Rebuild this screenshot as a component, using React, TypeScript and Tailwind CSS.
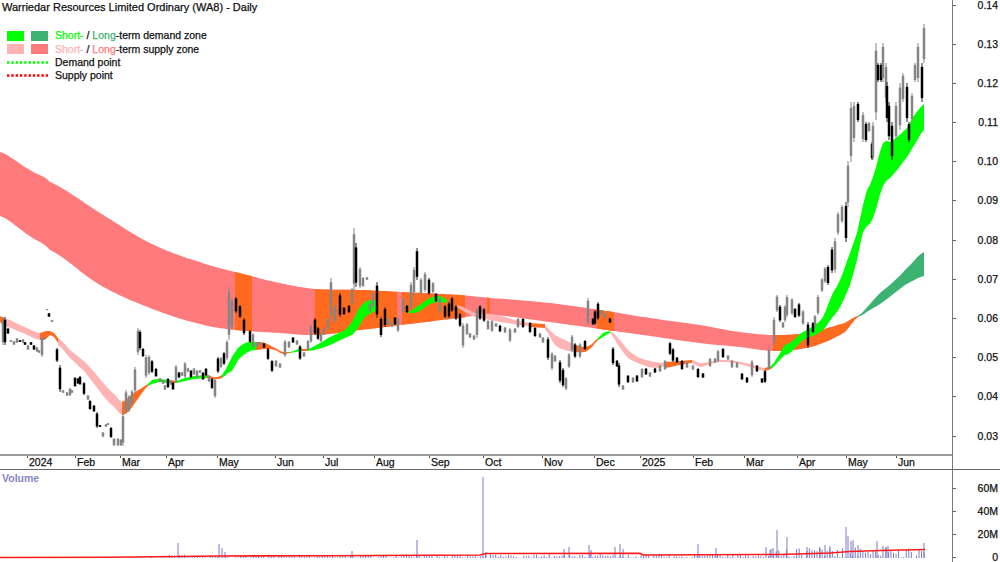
import React from "react";

type Bar = [number, number, number, number];
type Band = [number, number, number];

const ORANGE = "#ff6a1f";
const GREEN = "#00ff00";
const PINK = "#ffb3b3";
const RED = "#ff7b7b";
const SEA = "#3cb371";

const bars: Bar[] = [
  [3,317,345,0],[5,317,345,1],[8,328,334,1],[11,340,342,0],[14,341,345,0],[17,338,343,0],[20,340,342,1],[23,339,343,0],[25,342,345,1],[28,345,350,0],[31,342,345,1],[34,345,350,1],[37,347,352,0],[39,350,353,0],[42,337,357,0],[44,337,340,0],[47,309,310,0],[49,313,317,1],[52,320,322,0],
  [57,348,362,1],[60,365,392,1],[63,390,393,0],[67,392,396,0],[70,388,396,0],[72,390,393,0],[75,377,387,1],[78,378,384,1],[80,376,385,1],[84,382,395,1],[88,395,400,0],[90,400,410,1],[94,405,412,1],[97,412,428,1],[100,425,427,1],[103,432,437,0],[106,424,427,0],[108,423,425,0],[111,427,438,1],[114,438,446,0],[118,438,446,0],[121,439,446,0],[123,413,446,0],
  [126,390,414,0],[129,395,412,0],[132,390,405,0],[135,367,393,0],[138,328,355,0],[140,330,350,1],[143,348,357,1],[146,355,378,0],[149,355,375,0],[152,360,373,1],[156,368,377,1],[160,378,382,0],[163,380,384,0],[165,385,390,0],[168,378,388,1],[171,380,385,0],[173,382,390,1],[176,365,383,0],[179,372,378,1],[182,372,376,0],[185,362,378,0],[188,368,372,0],[191,370,378,1],[194,368,375,0],[197,370,378,0],[200,370,373,0],[203,372,380,1],[206,368,376,1],[209,375,382,0],[212,378,389,1],[215,378,398,0],
  [218,357,373,1],[221,357,368,0],[224,352,365,1],[227,340,360,0],[229,287,340,0],[232,298,330,0],[236,297,313,1],[240,305,318,1],[244,318,335,1],[250,330,343,1],[253,333,348,0],[257,342,347,0],[260,342,345,0],[264,343,348,1],[268,348,360,1],[272,360,372,1],[276,360,367,0],[280,363,368,0],[285,340,357,0],[289,341,348,0],[293,337,343,1],[297,340,345,0],[300,345,360,1],[304,352,357,0],[308,340,350,0],[311,325,343,0],[315,318,335,1],[318,327,340,1],[321,333,342,0],[324,328,335,0],[328,318,330,0],[331,278,320,0],[335,305,323,0],[340,293,317,1],[344,307,315,1],[349,305,313,1],[352,288,305,0],[354,228,290,0],[356,243,287,1],[360,267,288,0],[363,277,287,0],[367,277,280,0],[370,303,312,0],[373,292,307,0],[377,282,318,1],[381,317,337,1],[385,307,327,1],[388,318,325,0],[392,322,327,0],[395,317,325,1],[398,317,332,0],
  [403,298,313,0],[407,305,313,1],[411,282,310,0],[414,267,295,0],[417,248,280,1],[421,278,295,0],[425,272,292,0],[429,278,295,1],[433,282,293,0],[436,293,302,1],[440,297,313,0],[445,305,318,1],[449,302,318,1],[452,297,312,1],[456,305,320,1],[460,313,327,1],[463,323,348,0],[467,323,335,0],[470,333,338,0],[474,335,340,0],[477,307,338,0],[480,305,320,1],[484,308,322,1],[488,320,330,0],[492,320,332,0],[496,323,327,0],
  [500,325,332,1],[505,327,333,0],[510,328,342,0],[515,328,333,0],[518,318,328,0],[523,318,328,1],[530,322,333,1],[535,327,337,1],[540,333,338,0],[543,337,343,0],[548,337,360,1],[552,352,370,0],[555,355,362,0],[560,360,383,1],[563,368,387,1],[566,377,390,0],[569,353,368,0],[572,335,352,0],[575,343,358,1],[580,343,358,0],[585,340,350,1],
  [588,298,325,0],[593,318,325,1],[595,310,325,1],[598,302,320,1],[602,310,315,0],[605,313,318,0],[610,318,323,1],[613,347,365,1],[617,360,367,1],[619,363,387,1],[623,385,390,0],[628,375,383,1],[633,377,383,0],[637,375,382,1],[642,368,378,0],[646,368,375,1],[650,372,377,0],[655,368,373,1],[660,365,372,0],[665,360,370,0],[670,342,355,1],[673,348,362,1],[677,357,363,1],[682,360,370,1],[687,362,368,0],[693,365,370,0],[698,368,378,1],[703,373,378,1],[710,358,367,0],[715,358,363,0],[718,350,362,0],[723,348,358,1],[728,355,360,0],[732,360,368,0],[737,362,368,0],[742,373,380,1],[747,377,383,1],[752,360,377,0],[757,365,372,1],[762,378,383,1],[765,370,383,1],[769,348,370,0],
  [774,317,345,0],[777,295,312,0],[780,305,322,1],[783,322,328,0],[785,305,322,0],[787,295,317,0],[792,298,315,0],[795,308,318,1],[799,303,317,1],[803,310,325,0],[808,322,348,1],[813,322,333,1],[815,315,327,0],[818,295,315,0],[822,278,292,0],[825,267,283,0],[828,265,285,1],[832,247,273,1],[835,238,273,0],[838,212,235,0],[842,205,223,0],[846,202,242,1],[848,161,207,0],[851,102,162,0],[854,102,142,0],[858,102,122,1],[863,112,142,0],[866,122,142,1],[869,122,132,0],[872,142,160,1],[873,122,160,0],[876,43,120,0],[878,63,82,1],[881,63,82,1],[883,43,82,0],[886,63,102,0],[887,82,122,1],[889,102,140,1],[892,122,160,1],[896,102,140,0],[900,83,130,0],[903,73,102,0],[907,83,122,1],[909,122,142,1],[912,93,122,0],[915,63,82,0],[918,43,82,0],[922,63,102,1],[924,24,63,0],
];

const longZoneKeys: Band[] = [
  [0,152,216],[30,170,236],[50,182,250],[100,213,285],[150,243,308],[200,262,324],[235,272,330],[280,283,333],[315,289,335],[360,290,330],[400,292,325],[460,295,318],[490,298,315],[550,303,322],[600,310,329],[650,318,336],[700,325,343],[740,332,347],[773,335,351],
  [800,334,349],[820,330,344],[845,323,332],[858,316,317],
];

const shortZoneKeys: { c: string; b: Band[] }[] = [
  { c: ORANGE, b: [[0,316,322],[4,318,326]] },
  { c: PINK, b: [[4,318,326],[20,325,332],[40,333,340]] },
  { c: ORANGE, b: [[40,333,340],[46,331,339],[50,331,335],[54,333,337],[58,338,343]] },
  { c: PINK, b: [[58,338,345],[70,350,358],[85,362,372],[95,373,385],[105,385,398],[115,395,408],[122,402,415]] },
  { c: ORANGE, b: [[122,402,415],[128,398,412],[135,392,403],[142,388,393],[148,384,386]] },
  { c: GREEN, b: [[148,384,386],[152,380,384],[160,379,382],[168,380,383]] },
  { c: ORANGE, b: [[168,380,383],[176,381,383]] },
  { c: GREEN, b: [[176,381,383],[185,378,381],[195,376,379],[207,375,378]] },
  { c: ORANGE, b: [[207,375,378],[213,377,379],[218,377,379],[222,375,378]] },
  { c: GREEN, b: [[222,375,378],[228,365,373],[232,357,371],[238,348,360],[245,343,354],[250,342,351],[256,342,350]] },
  { c: ORANGE, b: [[256,342,350],[265,343,349],[275,348,350],[283,352,354],[290,352,353]] },
  { c: GREEN, b: [[290,352,353],[296,350,352],[302,348,351]] },
  { c: ORANGE, b: [[302,349,351],[308,349,351]] },
  { c: GREEN, b: [[308,349,351],[318,344,349],[330,337,345],[345,330,338],[352,322,335],[358,310,328],[365,302,317],[372,300,313],[378,300,310]] },
  { c: GREEN, b: [[408,312,313],[418,306,312],[430,298,304],[440,296,302],[447,300,303]] },
  { c: PINK, b: [[456,305,307],[465,308,312],[475,313,317],[490,314,320],[500,316,322],[520,321,325],[530,323,326]] },
  { c: ORANGE, b: [[530,323,327],[545,324,328]] },
  { c: PINK, b: [[545,326,329],[555,335,345],[565,340,350],[575,345,352]] },
  { c: ORANGE, b: [[575,345,352],[585,347,352],[592,344,347],[598,338,340]] },
  { c: GREEN, b: [[598,338,340],[603,333,337],[610,331,333]] },
  { c: PINK, b: [[610,331,333],[618,338,345],[628,350,358],[640,358,364],[655,362,368],[665,363,366]] },
  { c: ORANGE, b: [[665,362,368],[680,361,365],[692,360,363]] },
  { c: PINK, b: [[692,360,363],[700,363,367],[710,362,364],[720,360,362],[735,361,363],[750,364,367],[765,368,371]] },
  { c: ORANGE, b: [[765,368,371],[771,366,369]] },
  { c: GREEN, b: [[771,366,369],[777,358,363],[785,345,355],[790,343,353],[800,334,343],[807,330,338],[813,326,336],[823,317,330],[832,295,318],[840,280,307],[850,253,285],[857,233,260],[863,205,232],[867,190,226],[873,177,218],[883,143,186],[890,142,178],[897,137,170],[907,128,157],[913,117,147],[924,104,130]] },
];

const longDemandKeys: Band[] = [[858,316,317],[870,304,310],[880,293,304],[892,283,295],[905,270,285],[924,252,276]];

function smooth(b: Band[]): Band[] {
  if (b.length < 3) return b;
  const cr = (p0: number, p1: number, p2: number, p3: number, t: number) =>
    0.5 * (2 * p1 + (p2 - p0) * t + (2 * p0 - 5 * p1 + 4 * p2 - p3) * t * t + (3 * p1 - p0 - 3 * p2 + p3) * t * t * t);
  const out: Band[] = [];
  for (let i = 0; i < b.length - 1; i++) {
    const a = b[Math.max(i - 1, 0)];
    const c = b[i];
    const d = b[i + 1];
    const e = b[Math.min(i + 2, b.length - 1)];
    const steps = Math.max(1, Math.round((d[0] - c[0]) / 3));
    for (let s = 0; s < steps; s++) {
      const t = s / steps;
      out.push([c[0] + (d[0] - c[0]) * t, cr(a[1], c[1], d[1], e[1], t), cr(a[2], c[2], d[2], e[2], t)]);
    }
  }
  out.push(b[b.length - 1]);
  return out;
}

const longZone = smooth(longZoneKeys);
const longDemand = smooth(longDemandKeys);
const shortZones = shortZoneKeys.map((s) => ({ c: s.c, b: smooth(s.b) }));

function at(b: Band[], x: number): Band {
  for (let i = 1; i < b.length; i++) {
    if (x <= b[i][0]) {
      const [x0, t0, l0] = b[i - 1];
      const [x1, t1, l1] = b[i];
      const k = (x - x0) / (x1 - x0);
      return [x, t0 + (t1 - t0) * k, l0 + (l1 - l0) * k];
    }
  }
  return b[b.length - 1];
}

function slice(b: Band[], a: number, z: number): Band[] {
  return [at(b, a), ...b.filter((p) => p[0] > a && p[0] < z), at(b, z)];
}

function pts(b: Band[]) {
  const top = b.map((p) => `${p[0]},${p[1]}`);
  const low = [...b].reverse().map((p) => `${p[0]},${p[2]}`);
  return [...top, ...low].join(" ");
}

const orangeRanges: [number, number][] = [[235,252],[315,397],[402,465],[487,490],[597,614],[773,858]];

const spikes: Record<number, number> = {
  178: 543, 219: 544, 222: 548, 225: 552, 417: 540, 352: 551, 483: 477, 486: 552, 564: 549, 569: 547, 589: 545, 591: 550, 615: 547, 620: 544, 623: 549, 698: 544, 716: 548, 770: 550, 773: 548, 777: 530, 787: 537, 807: 547, 820: 548, 825: 545, 830: 546, 846: 527, 848: 536, 851: 541, 853: 540, 858: 545, 877: 541, 883: 546, 886: 547, 888: 546, 924: 543,
};

function volumeBars() {
  const out: { x: number; top: number }[] = [];
  for (let x = 1; x < 925; x += 2.55) {
    const r = Math.abs(Math.sin(x * 12.9898) * 43758.5453) % 1;
    const scale = x < 160 ? 1 : x < 480 ? 3.5 : x < 765 ? 4 : 11;
    out.push({ x, top: 558 - r * scale });
  }
  Object.entries(spikes).forEach(([x, top]) => out.push({ x: Number(x), top }));
  return out;
}

const prices = ["0.14","0.13","0.12","0.11","0.10","0.09","0.08","0.07","0.06","0.05","0.04","0.03"];
const months: [string, number][] = [["",27],["2024",48],["Feb",45],["Mar",46],["Apr",51],["May",58],["Jun",48],["Jul",51],["Aug",55],["Sep",54],["Oct",59],["Nov",52],["Dec",46],["2025",53],["Feb",51],["Mar",53],["Apr",49],["May",50],["Jun",56]];

function PriceChart() {
  return (
    <svg width="952" height="454" viewBox="0 0 952 454" className="block">
      <polygon points={pts(longZone)} fill={RED} />
      {orangeRanges.map(([a, z]) => (
        <polygon key={a} points={pts(slice(longZone, a, z))} fill={ORANGE} />
      ))}
      <polygon points={pts(longDemand)} fill={SEA} />
      {shortZones.map((s, i) => (
        <polygon key={i} points={pts(s.b)} fill={s.c} />
      ))}
      {bars.map(([x, h, l, c]) => {
        const colour = c ? "#000000" : "#858585";
        const inset = (l - h) * 0.1;
        return (
          <g key={x + "-" + h}>
            <line x1={x} x2={x} y1={h} y2={l} stroke={c ? "#222222" : "#858585"} strokeWidth="1" />
            <rect x={x - 1.25} y={h + inset} width={2.5} height={Math.max(l - h - inset * 2, 1)} fill={colour} />
          </g>
        );
      })}
    </svg>
  );
}

function VolumeChart() {
  return (
    <svg width="952" height="92" viewBox="0 470 952 92" className="block">
      {volumeBars().map((b, i) => (
        <line key={i} x1={b.x} x2={b.x} y1={b.top} y2={558} stroke="#7a7acc" strokeWidth="1" />
      ))}
      <polyline
        points="0,557.5 110,557.2 220,556 330,555.7 480,555 486,553.5 640,553.3 643,555 780,554.5 830,553 850,551.5 880,550.5 925,549.5"
        fill="none"
        stroke="#ff1a1a"
        strokeWidth="1.6"
      />
    </svg>
  );
}

function Dotted({ colour }: { colour: string }) {
  return (
    <svg width="41" height="3" className="block">
      <line x1="0" x2="41" y1="1.5" y2="1.5" stroke={colour} strokeWidth="2.5" strokeDasharray="2.4 1.9" />
    </svg>
  );
}

function Legend() {
  return (
    <div className="absolute left-0.5 top-0 text-[10.5px] leading-[13px] text-[#111111] font-normal [-webkit-text-stroke:0.25px_currentColor]">
      <div className="text-[11px] leading-[14px]">Warriedar Resources Limited Ordinary (WA8) - Daily</div>
      <div className="mt-[15px] ml-[5px] flex flex-col">
        <div className="flex items-center h-[13.4px]">
          <span className="w-[17px] h-[10px] bg-[#00ff00]" />
          <span className="w-[17px] h-[10px] bg-[#3cb371] ml-[7px]" />
          <span className="ml-[7px]"><span className="text-[#00ff00]">Short-</span> / <span className="text-[#3cb371]">Long</span>-term demand zone</span>
        </div>
        <div className="flex items-center h-[13.4px]">
          <span className="w-[17px] h-[10px] bg-[#ffb3b3]" />
          <span className="w-[17px] h-[10px] bg-[#ff7b7b] ml-[7px]" />
          <span className="ml-[7px]"><span className="text-[#ffb3b3]">Short-</span> / <span className="text-[#ff7b7b]">Long</span>-term supply zone</span>
        </div>
        <div className="flex items-center h-[13.4px]">
          <Dotted colour="#00ff00" />
          <span className="ml-[7px]">Demand point</span>
        </div>
        <div className="flex items-center h-[13.4px]">
          <Dotted colour="#ff0000" />
          <span className="ml-[7px]">Supply point</span>
        </div>
      </div>
    </div>
  );
}

function AxisRow({ label, height }: { label: string; height: string }) {
  return (
    <div className={"flex items-center " + height}>
      <span className="w-[3px] h-px bg-[#666666]" />
      <span className="flex-1 text-right pr-[2px] leading-[9px]">{label}</span>
    </div>
  );
}

export default function App() {
  return (
    <div className="w-[1000px] h-[562px] overflow-hidden bg-white text-[#111111] text-[10.5px] [-webkit-text-stroke:0.25px_currentColor] [font-family:'Liberation_Sans',Arial,sans-serif]">
      <div className="flex h-[470px] border-b border-[#666666]">
        <div className="w-[952px] flex flex-col relative">
          <PriceChart />
          <div className="h-[2px] bg-[#999999]" />
          <div className="flex h-[13px]">
            {months.map(([m, w], i) => (
              <div key={i} className="h-full relative shrink-0" style={{ width: w }}>
                {m && <span className="absolute left-0 top-0 w-px h-[2px] bg-[#555555]" />}
                {m && <span className="block pl-[2px] leading-[13px]">{m}</span>}
              </div>
            ))}
          </div>
          <Legend />
        </div>
        <div className="flex-1 border-l border-[#777777] overflow-hidden">
          <div className="-mt-[14.6px]">
            {prices.map((p) => (
              <AxisRow key={p} label={p} height="h-[39.2px]" />
            ))}
          </div>
        </div>
      </div>
      <div className="flex h-[92px]">
        <div className="w-[952px] relative">
          <VolumeChart />
          <div className="absolute left-0.5 top-0 leading-[16px] text-[#8888c4] font-bold [-webkit-text-stroke:0px]">Volume</div>
        </div>
        <div className="flex-1 border-l border-[#777777] overflow-hidden pt-[7.6px]">
          {["60M", "40M", "20M", "0"].map((v) => (
            <AxisRow key={v} label={v} height="h-[22.7px]" />
          ))}
        </div>
      </div>
    </div>
  );
}
